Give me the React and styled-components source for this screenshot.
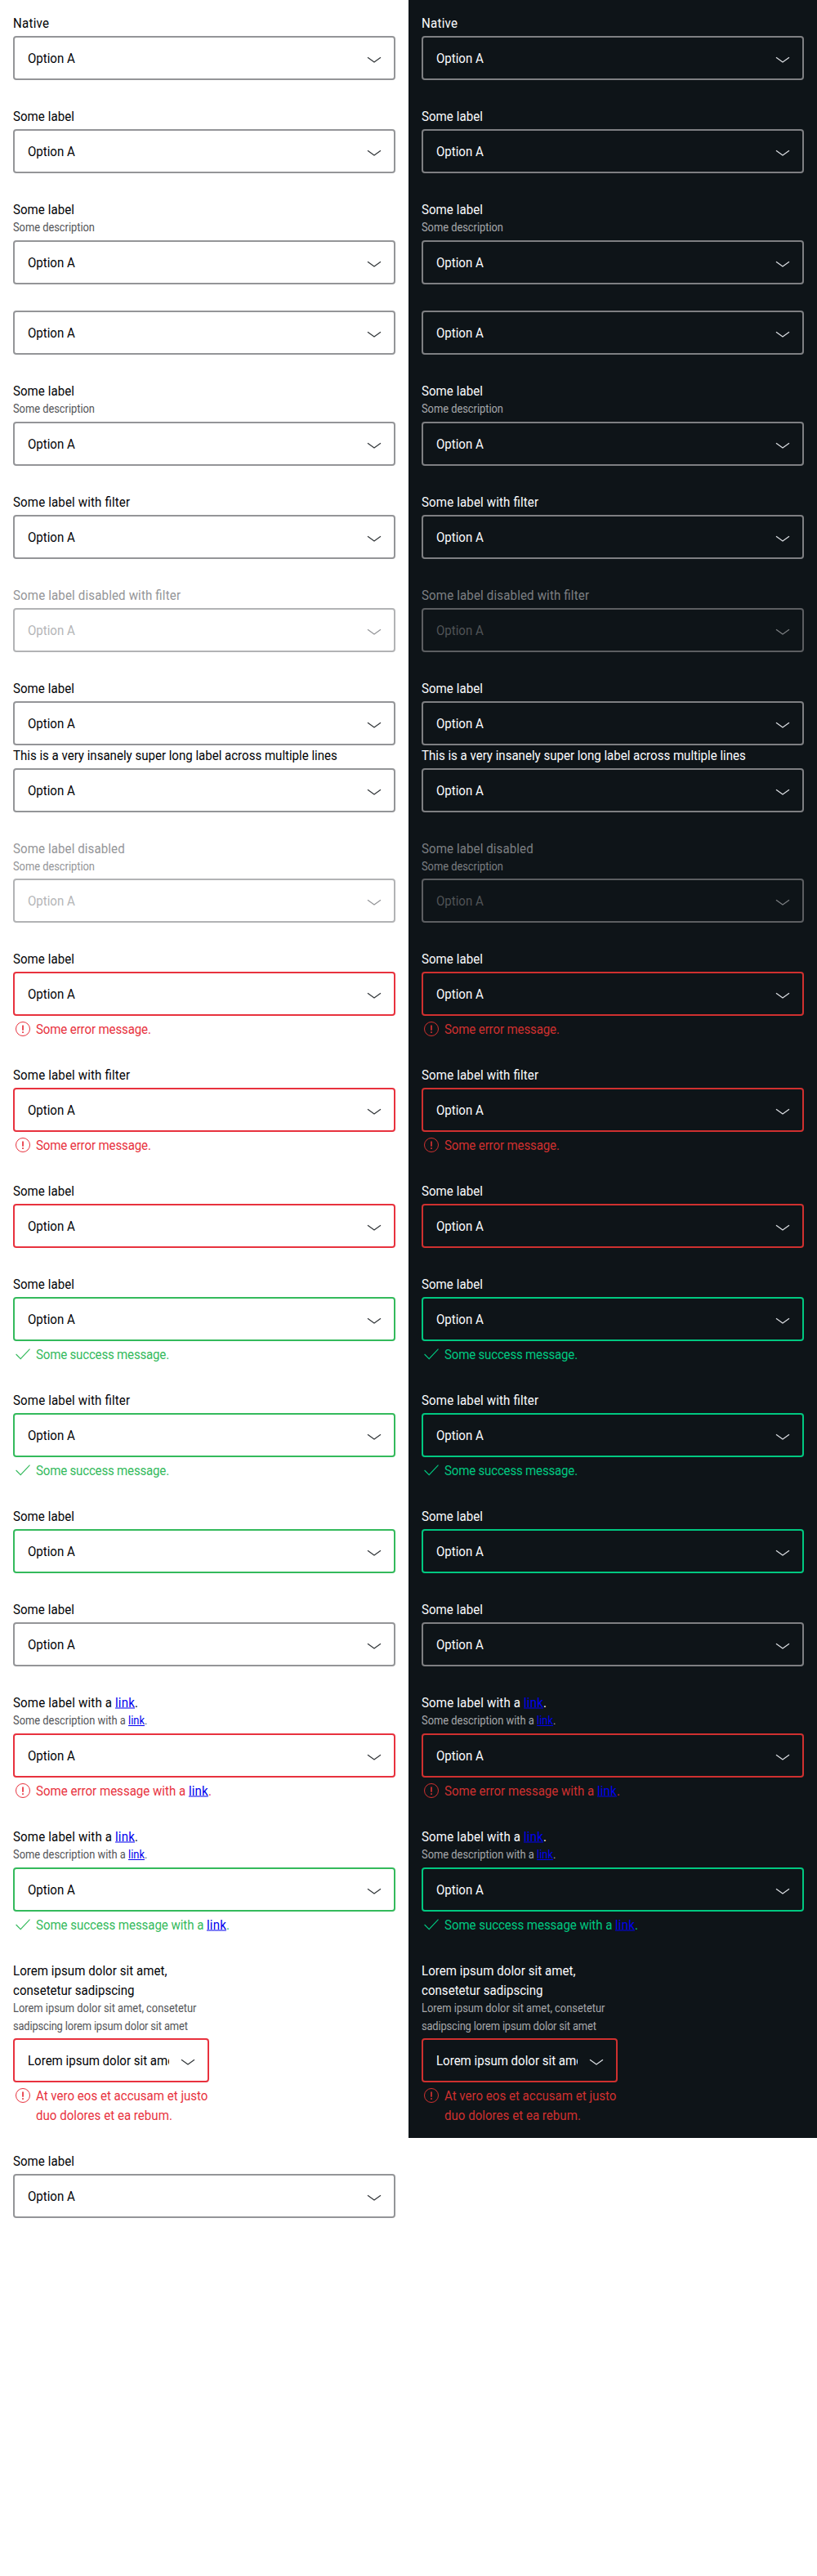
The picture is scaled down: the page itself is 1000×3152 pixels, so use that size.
import React from "react";
import styled, { createGlobalStyle, css, ThemeProvider } from "styled-components";

const light = {
  background: "#ffffff",
  text: "#010205",
  muted: "#535457",
  icon: "#323639",
  border: "#949598",
  disabledText: "#949598",
  disabledOption: "#b4b5b7",
  disabledBorder: "#b2b3b5",
  error: "#e8323e",
  success: "#34ba5c",
};

const dark = {
  background: "#0e1418",
  text: "#fbfcff",
  muted: "#a6a8ab",
  icon: "#dcdfe3",
  border: "#7e7f82",
  disabledText: "#7c7f82",
  disabledOption: "#505356",
  disabledBorder: "#5c5e61",
  error: "#cf302f",
  success: "#00c880",
};

const GlobalStyle = createGlobalStyle`
  body {
    margin: 0;
    background: #ffffff;
  }
`;

const Page = styled.main`
  display: flex;
  flex-direction: column;
  width: 1000px;
  min-height: 3152px;
  font-family: Roboto, "Open Sans", sans-serif;
  font-size: 16px;
  line-height: 24px;
`;

const Columns = styled.div`
  display: grid;
  grid-template-columns: 1fr 1fr;
`;

const Panel = styled.section`
  display: flex;
  flex-direction: column;
  box-sizing: border-box;
  width: 500px;
  padding: 16px;
  background: ${({ theme }) => theme.background};
  color: ${({ theme }) => theme.text};
`;

const Field = styled.div`
  display: flex;
  flex-direction: column;
  gap: 4px;
  width: ${({ $narrow }) => ($narrow ? "240px" : "auto")};
  margin-top: ${({ $attached }) => ($attached ? "0" : "32px")};
  &:first-child {
    margin-top: 0;
  }
`;

const Caption = styled.div`
  display: flex;
  flex-direction: column;
`;

const Label = styled.label`
  display: block;
  height: 24px;
  color: ${({ theme, $disabled }) => ($disabled ? theme.disabledText : theme.text)};
`;

const Description = styled.span`
  display: block;
  height: 21.75px;
  font-size: 14px;
  line-height: 21.75px;
  color: ${({ theme, $disabled }) => ($disabled ? theme.disabledText : theme.muted)};
`;

/* Narrows the letterforms a little, anchored at the start of the line. */
const Run = styled.span`
  display: block;
  width: max-content;
  white-space: nowrap;
  letter-spacing: ${({ $track }) => $track}px;
  font-feature-settings: "liga" 1;
  transform: ${({ $small }) => ($small ? "scaleX(0.92)" : "translateY(0.5px) scaleX(0.94)")};
  transform-origin: left center;
`;

const Link = styled.a`
  color: #0000ee;
  text-decoration: underline;
  letter-spacing: ${({ $small }) => ($small ? 0 : 0.2)}px;
`;

const stateColor = ({ theme, $state }) =>
  ({ error: theme.error, success: theme.success, disabled: theme.disabledBorder })[$state] || theme.border;

const Box = styled.div`
  display: flex;
  align-items: center;
  box-sizing: border-box;
  height: 54px;
  padding: 0 12px 0 16px;
  gap: 11px;
  border: 2px solid ${stateColor};
  border-radius: 4px;
  color: ${({ theme, $state }) => ($state === "disabled" ? theme.disabledOption : theme.text)};
`;

const Value = styled.span`
  flex: 1;
  min-width: 0;
  overflow: hidden;
  white-space: nowrap;
`;

const Icon = styled.svg`
  flex: none;
  width: 24px;
  height: 24px;
  fill: none;
  stroke: currentColor;
  stroke-width: ${({ $weight }) => $weight || 1};
`;

const Arrow = styled(Icon)`
  ${({ theme, $state }) => css`
    color: ${$state === "disabled" ? theme.disabledText : theme.icon};
  `}
`;

const Message = styled.div`
  display: flex;
  align-items: flex-start;
  gap: 4px;
  color: ${stateColor};
`;

const MessageText = styled.span`
  display: flex;
  flex-direction: column;
`;

function Chevron({ state }) {
  return (
    <Arrow $state={state} $weight={1.25} viewBox="0 0 24 24">
      <path d="M4 11.3L12 17L20 11.3" />
    </Arrow>
  );
}

function ErrorIcon() {
  return (
    <Icon viewBox="0 0 24 24">
      <circle cx="12" cy="12" r="8.5" />
      <path d="M12 7.5V13.7M12 15.3V17" strokeWidth="1.7" />
    </Icon>
  );
}

function CheckIcon() {
  return (
    <Icon $weight={1.1} viewBox="0 0 24 24">
      <path d="M3.6 12L9.2 17.6L20.5 5.6" />
    </Icon>
  );
}

/* Each line of copy is [text, tracking, hasLink]. */
function Lines({ lines, small }) {
  return lines.map(([text, track, hasLink]) => (
    <Run key={text} $track={track} $small={small}>
      {text}
      {hasLink && (
        <>
          {" "}
          <Link href="#" $small={small}>link</Link>.
        </>
      )}
    </Run>
  ));
}

const option = [["Option A", 0]];
const some = [["Some label", 0.06]];
const filter = [["Some label with filter", 0.163]];
const description = [["Some description", -0.03]];
const linkLabel = [["Some label with a", 0.187, true]];
const linkDescription = [["Some description with a", 0, true]];

const errorText = [["Some error message.", -0.132]];
const successText = [["Some success message.", -0.19]];

const fields = [
  { label: [["Native", 0.3]] },
  { label: some },
  { label: some, description },
  {},
  { label: some, description },
  { label: filter },
  { label: [["Some label disabled with filter", 0.172]], state: "disabled" },
  { label: some },
  {
    label: [["This is a very insanely super long label across multiple lines", 0]],
    attached: true,
  },
  { label: [["Some label disabled", 0.116]], description, state: "disabled" },
  { label: some, state: "error", message: errorText },
  { label: filter, state: "error", message: errorText },
  { label: some, state: "error" },
  { label: some, state: "success", message: successText },
  { label: filter, state: "success", message: successText },
  { label: some, state: "success" },
  { label: some },
  {
    label: linkLabel,
    description: linkDescription,
    state: "error",
    message: [["Some error message with a", 0.01, true]],
  },
  {
    label: linkLabel,
    description: linkDescription,
    state: "success",
    message: [["Some success message with a", -0.049, true]],
  },
  {
    label: [
      ["Lorem ipsum dolor sit amet,", 0.055],
      ["consetetur sadipscing", 0.03],
    ],
    description: [
      ["Lorem ipsum dolor sit amet, consetetur", -0.01],
      ["sadipscing lorem ipsum dolor sit amet", -0.16],
    ],
    value: [["Lorem ipsum dolor sit amet", 0]],
    narrow: true,
    state: "error",
    message: [
      ["At vero eos et accusam et justo", 0.01],
      ["duo dolores et ea rebum.", 0.033],
    ],
  },
];

function SelectField({ label, description: note, value = option, state, message, narrow, attached }) {
  const disabled = state === "disabled";
  return (
    <Field $narrow={narrow} $attached={attached}>
      {label && (
        <Caption>
          {label.map((line) => (
            <Label key={line[0]} $disabled={disabled}>
              <Lines lines={[line]} />
            </Label>
          ))}
          {note &&
            note.map((line) => (
              <Description key={line[0]} $disabled={disabled}>
                <Lines lines={[line]} small />
              </Description>
            ))}
        </Caption>
      )}
      <Box $state={state}>
        <Value>
          <Lines lines={value} />
        </Value>
        <Chevron state={state} />
      </Box>
      {message && (
        <Message $state={state}>
          {state === "error" ? <ErrorIcon /> : <CheckIcon />}
          <MessageText>
            <Lines lines={message} />
          </MessageText>
        </Message>
      )}
    </Field>
  );
}

export default function App() {
  return (
    <Page>
      <GlobalStyle />
      <Columns>
        {[light, dark].map((theme) => (
          <ThemeProvider key={theme.background} theme={theme}>
            <Panel>
              {fields.map((field, index) => (
                <SelectField key={index} {...field} />
              ))}
            </Panel>
          </ThemeProvider>
        ))}
      </Columns>
      <ThemeProvider theme={light}>
        <Panel>
          <SelectField label={some} />
        </Panel>
      </ThemeProvider>
    </Page>
  );
}
